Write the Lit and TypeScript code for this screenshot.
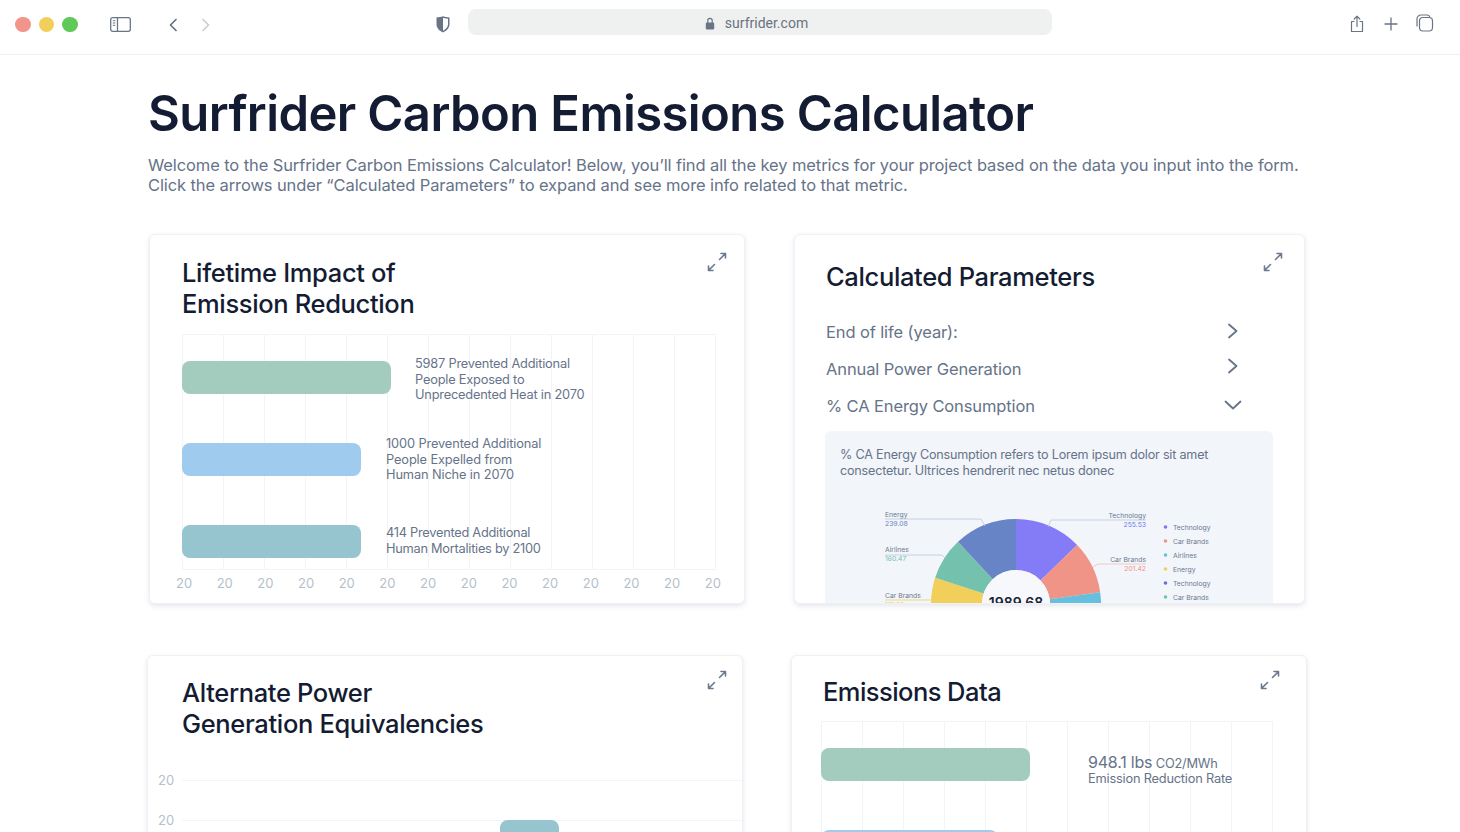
import { LitElement, html, css, svg } from "lit";
import { customElement } from "lit/decorators.js";

const expand = html`<svg class="expand" viewBox="0 0 20 20" fill="none" stroke-width="1.600" stroke-linecap="round" stroke-linejoin="round"><path d="M14 1.500h4.500V6M18.500 1.500l-6 6M6 18.500H1.500V14M1.500 18.500l6-6"/></svg>`;

function polar(a: number, r: number, cx = 1016, cy = 604) {
  const t = (a * Math.PI) / 180;
  return [cx + r * Math.sin(t), cy - r * Math.cos(t)];
}
function seg(a0: number, a1: number, color: string) {
  const [x0, y0] = polar(a0, 85);
  const [x1, y1] = polar(a1, 85);
  const [x2, y2] = polar(a1, 34);
  const [x3, y3] = polar(a0, 34);
  return svg`<path fill=${color} d="M${x0} ${y0}A85 85 0 0 1 ${x1} ${y1}L${x2} ${y2}A34 34 0 0 0 ${x3} ${y3}Z"/>`;
}

const legend: [string, string, number][] = [
  ["Technology", "#7b78f2", 527],
  ["Car Brands", "#f0948a", 541],
  ["Airlines", "#66bfdc", 555],
  ["Energy", "#f2cf5b", 569],
  ["Technology", "#6a70d8", 583],
  ["Car Brands", "#74c1ae", 597],
];

const gauge = svg`
  ${seg(0, 46, "#847bf7")}
  ${seg(46, 82, "#f19488")}
  ${seg(82, 120, "#66bfdc")}
  ${seg(240, 288, "#f2cf5b")}
  ${seg(288, 317, "#74c1ae")}
  ${seg(317, 360, "#6784c6")}
  <circle cx="1016" cy="604" r="34" fill="#f6f8fb"/>
  <text class="big" x="1016" y="608" text-anchor="middle">1989.68</text>

  <path class="lead" stroke="#b9c9dc" d="M885 519H981L985 526"/>
  <text class="l" x="885" y="517">Energy</text>
  <text class="v" fill="#6784c6" x="885" y="526">239.08</text>

  <path class="lead" stroke="#b9c9dc" d="M1146 520H1051L1048 527"/>
  <text class="l" x="1146" y="518" text-anchor="end">Technology</text>
  <text class="v" fill="#6f78f5" x="1146" y="527" text-anchor="end">255.53</text>

  <path class="lead" stroke="#f5bdb6" d="M1146 564H1098L1093 567"/>
  <text class="l" x="1146" y="562" text-anchor="end">Car Brands</text>
  <text class="v" fill="#f19488" x="1146" y="571" text-anchor="end">201.42</text>

  <path class="lead" stroke="#b9c9dc" d="M885 555H942L946 559"/>
  <text class="l" x="885" y="552">Airlines</text>
  <text class="v" fill="#74c1ae" x="885" y="561">160.47</text>

  <path class="lead" stroke="#f2cf5b" d="M885 600H932"/>
  <text class="l" x="885" y="598">Car Brands</text>
  <text class="v" fill="#f2cf5b" x="885" y="607">171.55</text>

  ${legend.map(
    ([name, color, y]) => svg`
      <circle cx="1165.500" cy=${y} r="1.800" fill=${color}/>
      <text class="lg" x="1173" y=${y + 2.5}>${name}</text>`
  )}
`;

@customElement("app-root")
export class AppRoot extends LitElement {
  static styles = css`
    :host {
      display: block;
      height: 832px;
      overflow: hidden;
      background: #fff;
      font-family: "Inter", "Liberation Sans", sans-serif;
      color: #667389;
    }
    .toolbar {
      box-sizing: content-box;
      height: 49px;
      border-bottom: 1px solid #eef0f4;
      display: flex;
      align-items: center;
      padding: 0 0 5px 15px;
    }
    .lights { display: flex; gap: 8px; }
    .lights i { width: 15.500px; height: 15.500px; border-radius: 50%; display: block; }
    .r { background: #f1948a; }
    .y { background: #f2cf5b; }
    .g { background: #5fc95a; }
    .tb { display: block; flex: none; }
    .side { margin-left: 32px; }
    .back { margin-left: 38px; }
    .fwd { margin-left: 25px; }
    .shield { margin-left: 226px; }
    .url {
      margin: 0 0 5px 18px;
      width: 584px;
      height: 26px;
      box-sizing: border-box;
      padding: 2px 6px 0 0;
      border-radius: 8px;
      background: #eff1f1;
      display: flex;
      align-items: center;
      justify-content: center;
      gap: 10px;
      font-family: "Roboto", sans-serif;
      font-size: 14px;
      color: #6b7280;
    }
    .share { margin-left: 298px; margin-bottom: 2px; }
    .plus { margin-left: 20px; margin-bottom: 2px; }
    .tabs { margin-left: 17px; margin-bottom: 4px; }

    h1 {
      margin: 28px 0 0 148px;
      font-size: 49px;
      line-height: 62px;
      font-weight: 600;
      letter-spacing: -0.600px;
      color: #141c33;
      white-space: nowrap;
    }
    .intro {
      margin: 10px 0 0 148px;
      font-size: 16.500px;
      line-height: 20px;
      letter-spacing: -0.105px;
      white-space: nowrap;
    }
    .row { display: flex; align-items: flex-start; }
    .row1 { margin: 39px 0 0 149px; gap: 49px; }
    .row2 { margin: 51px 0 0 147px; gap: 48px; }

    .card {
      position: relative;
      box-sizing: border-box;
      border: 1px solid #eef1f5;
      border-radius: 6px;
      background: #fff;
      box-shadow: 0 2px 5px rgba(100, 116, 139, 0.18);
      overflow: hidden;
      flex: none;
    }
    .c1 { width: 596px; height: 370px; padding: 22px 0 0 32px; }
    .c2 { width: 511px; height: 370px; padding: 26px 0 0 31px; }
    .c3 { width: 596px; height: 240px; padding: 21px 0 0 34px; }
    .c4 { width: 516px; height: 240px; padding: 20px 0 0 31px; }
    .expand { position: absolute; width: 20px; height: 20px; top: 17px; stroke: #6b7a90; }
    .c1 .expand { right: 17px; }
    .c2 .expand { right: 21px; }
    .c3 .expand { right: 15px; top: 14px; }
    .c4 .expand { right: 26px; top: 14px; }
    h2 {
      margin: 0;
      font-size: 25.500px;
      line-height: 31px;
      font-weight: 500;
      letter-spacing: -0.350px;
      color: #141c33;
    }
    .c4 h2 { letter-spacing: -0.550px; }

    .plot {
      box-sizing: border-box;
      border-top: 1px solid #f1f4f8;
      border-bottom: 1px solid #f1f4f8;
      background-image: repeating-linear-gradient(
        to right,
        #f1f4f8 0,
        #f1f4f8 1px,
        transparent 1px,
        transparent 41px
      );
    }
    .p1 {
      width: 534px;
      height: 236px;
      margin-top: 15px;
      padding-top: 26px;
      display: flex;
      flex-direction: column;
      gap: 49px;
    }
    .p4 {
      width: 452px;
      height: 120px;
      margin: 14px 0 0 -2px;
      padding-top: 26px;
      border-bottom: none;
      display: flex;
      flex-direction: column;
      gap: 49px;
    }
    .bar-row { display: flex; align-items: center; height: 33px; flex: none; }
    .bar { height: 33px; border-radius: 8px; flex: none; }
    .green { background: #a3ccbf; width: 209px; }
    .blue { background: #9fcbef; width: 179px; }
    .teal { background: #96c4cf; width: 179px; }
    .p4 .blue { width: 177px; }
    .bar-text {
      font-size: 12.800px;
      line-height: 15.400px;
      letter-spacing: -0.200px;
      white-space: pre-line;
      flex: none;
    }
    .green + .bar-text { margin-left: 24px; margin-top: 4px; }
    .blue + .bar-text, .teal + .bar-text { margin-left: 25px; }
    .blue + .bar-text { letter-spacing: -0.120px; }
    .teal + .bar-text { margin-top: -2px; letter-spacing: -0.260px; }
    .p4 .green + .bar-text { margin-left: 58px; margin-top: 12px; }
    .em { font-size: 16px; letter-spacing: -0.200px; }
    .axis {
      width: 545px;
      margin: 5px 0 0 -6px;
      display: flex;
      justify-content: space-between;
      font-size: 13px;
      line-height: 17px;
      color: #b4bfcc;
    }

    .param {
      height: 37px;
      width: 414px;
      display: flex;
      align-items: center;
      justify-content: space-between;
      font-size: 16.500px;
      letter-spacing: -0.120px;
    }
    .params { margin-top: 21px; }
    .chev { display: block; stroke: #667389; flex: none; }
    .up1 { margin-top: -2px; }
    .up2 { margin-top: -6px; }
    .down { margin-right: -2px; }
    .panel {
      width: 448px;
      height: 180px;
      margin: 7px 0 0 -1px;
      background: #f2f5fa;
      border-radius: 6px;
      padding: 16px 0 0 15px;
      box-sizing: border-box;
      overflow: hidden;
    }
    .panel p {
      margin: 0;
      font-size: 12.600px;
      line-height: 16px;
      letter-spacing: -0.200px;
      white-space: pre-line;
    }
    .gauge { display: block; width: 448px; height: 120px; margin: 26px 0 0 -15px; }
    .l, .v, .lg { font-size: 6.800px; font-family: "Inter", sans-serif; }
    .l, .lg { fill: #6b7a90; }
    .lead { fill: none; stroke-width: 0.800px; }
    .big { font-size: 14px; font-weight: 600; fill: #1a2233; font-family: "Inter", sans-serif; }

    .ychart { margin: 21px 0 0 -24px; }
    .yrow { position: relative; display: flex; align-items: center; height: 40px; gap: 8px; font-size: 13px; color: #b4bfcc; }
    .yrow span { width: 16px; flex: none; }
    .yrow i { display: block; flex: 1; height: 1px; background: #f1f4f8; }
    .ybar {
      position: absolute;
      left: 342px;
      top: 20px;
      width: 59px;
      height: 40px;
      border-radius: 8px 8px 0 0;
      background: #96c4cf;
    }
  `;

  render() {
    return html`
      <header class="toolbar">
        <div class="lights"><i class="r"></i><i class="y"></i><i class="g"></i></div>
        <svg class="tb side" width="21" height="15" viewBox="0 0 21 15" fill="none" stroke="#6b7485" stroke-width="1.300">
          <rect x=".7" y=".7" width="19.600" height="13.600" rx="2"/>
          <path d="M7.500 .7v13.600"/>
          <path d="M2.800 3.700h2.500M2.800 6h2.500M2.800 8.300h2.500" stroke-width="1"/>
        </svg>
        <svg class="tb back" width="8" height="14" viewBox="0 0 8 14" fill="none" stroke="#667085" stroke-width="1.700" stroke-linecap="round" stroke-linejoin="round"><path d="M7 1.500 1.500 7 7 12.500"/></svg>
        <svg class="tb fwd" width="8" height="14" viewBox="0 0 8 14" fill="none" stroke="#c9ced6" stroke-width="1.700" stroke-linecap="round" stroke-linejoin="round"><path d="M1 1.500 6.500 7 1 12.500"/></svg>
        <svg class="tb shield" width="14" height="17" viewBox="0 0 14 17">
          <path fill="#6b7485" d="M.5 1.500C3 1.200 5 .9 7 .3c2 .6 4 .9 6.500 1.200v7c0 3.500-3 6.300-6.500 8-3.500-1.700-6.500-4.500-6.500-8z"/>
          <path fill="#fff" d="M7 2 12 2.800v5.700c0 2.600-2.300 4.700-5 6.200z"/>
        </svg>
        <div class="url">
          <svg width="10" height="13" viewBox="0 0 10 13"><path fill="none" stroke="#6b7485" stroke-width="1.200" d="M2.800 6V3.500a2.200 2.200 0 0 1 4.400 0V6"/><rect x=".8" y="5.500" width="8.400" height="7" rx="1.300" fill="#6b7485"/></svg>
          <span>surfrider.com</span>
        </div>
        <svg class="tb share" width="14" height="18" viewBox="0 0 14 18" fill="none" stroke="#6b7485" stroke-width="1.200" stroke-linecap="round" stroke-linejoin="round"><path d="M4 6.500H1.500v10h11v-10H10M7 11.500V1.500M4.200 4 7 1.200 9.800 4"/></svg>
        <svg class="tb plus" width="14" height="14" viewBox="0 0 14 14" fill="none" stroke="#6b7485" stroke-width="1.300" stroke-linecap="round"><path d="M7 1v12M1 7h12"/></svg>
        <svg class="tb tabs" width="19" height="18" viewBox="0 0 19 18" fill="none" stroke="#6b7485" stroke-width="1.200"><rect x="4.500" y="3.500" width="13" height="13.500" rx="3.500"/><path d="M2 12.500V5a4 4 0 0 1 4-4h6.500a3 3 0 0 1 2.500 2.500"/></svg>
      </header>
      <main>
        <h1>Surfrider Carbon Emissions Calculator</h1>
        <p class="intro">Welcome to the Surfrider Carbon Emissions Calculator! Below, you’ll find all the key metrics for your project based on the data you input into the form.<br />Click the arrows under “Calculated Parameters” to expand and see more info related to that metric.</p>

        <div class="row row1">
          <section class="card c1">
            ${expand}
            <h2>Lifetime Impact of<br />Emission Reduction</h2>
            <div class="plot p1">
              <div class="bar-row"><div class="bar green"></div><div class="bar-text">5987 Prevented Additional
People Exposed to
Unprecedented Heat in 2070</div></div>
              <div class="bar-row"><div class="bar blue"></div><div class="bar-text">1000 Prevented Additional
People Expelled from
Human Niche in 2070</div></div>
              <div class="bar-row"><div class="bar teal"></div><div class="bar-text">414 Prevented Additional
Human Mortalities by 2100</div></div>
            </div>
            <div class="axis">${Array.from({ length: 14 }, () => html`<span>20</span>`)}</div>
          </section>

          <section class="card c2">
            ${expand}
            <h2>Calculated Parameters</h2>
            <div class="params">
              <div class="param"><span>End of life (year):</span>
                <svg class="chev up1" width="14" height="18" viewBox="0 0 14 18" fill="none" stroke-width="1.800" stroke-linecap="round" stroke-linejoin="round"><path d="M3 2.500 10.500 9 3 15.500"/></svg></div>
              <div class="param"><span>Annual Power Generation</span>
                <svg class="chev up2" width="14" height="18" viewBox="0 0 14 18" fill="none" stroke-width="1.800" stroke-linecap="round" stroke-linejoin="round"><path d="M3 2.500 10.500 9 3 15.500"/></svg></div>
              <div class="param"><span>% CA Energy Consumption</span>
                <svg class="chev up1 down" width="18" height="12" viewBox="0 0 18 12" fill="none" stroke-width="1.800" stroke-linecap="round" stroke-linejoin="round"><path d="M1.500 2.500 9 9.500l7.500-7"/></svg></div>
            </div>
            <div class="panel">
              <p>% CA Energy Consumption refers to Lorem ipsum dolor sit amet
consectetur. Ultrices hendrerit nec netus donec</p>
              <svg class="gauge" viewBox="825 505 448 120">${gauge}</svg>
            </div>
          </section>
        </div>

        <div class="row row2">
          <section class="card c3">
            ${expand}
            <h2>Alternate Power<br />Generation Equivalencies</h2>
            <div class="ychart">
              <div class="yrow"><span>20</span><i></i></div>
              <div class="yrow"><span>20</span><i></i><div class="ybar"></div></div>
            </div>
          </section>

          <section class="card c4">
            ${expand}
            <h2>Emissions Data</h2>
            <div class="plot p4">
              <div class="bar-row"><div class="bar green"></div><div class="bar-text"><span class="em">948.1 lbs</span> CO2/MWh
Emission Reduction Rate</div></div>
              <div class="bar-row"><div class="bar blue"></div></div>
            </div>
          </section>
        </div>
      </main>
    `;
  }
}
